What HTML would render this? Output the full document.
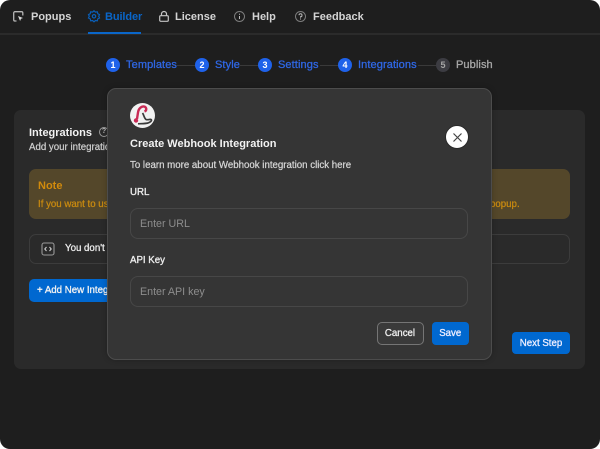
<!DOCTYPE html>
<html><head><meta charset="utf-8"><style>
html,body{margin:0;padding:0;background:#fff}
#p{position:relative;width:600px;height:449px;overflow:hidden;background:#1e1e1e;border-radius:10px;font-family:"Liberation Sans",sans-serif;font-weight:700}
#p *{box-sizing:border-box}
.t{position:absolute;white-space:nowrap;line-height:14px}
.b{position:absolute}
.n{font-size:11px;color:#d4d4d4;top:9px}
.s{font-size:11px;color:#2f67e4;top:58px;font-weight:400;letter-spacing:.1px;-webkit-text-stroke:.3px #2f67e4}
.c{position:absolute;top:58px;width:14px;height:14px;border-radius:50%;background:#1f62ea;color:#fff;font-size:9px;line-height:14px;text-align:center}
.l{position:absolute;top:65px;height:1px;background:#3a3a3a;width:18px}
svg{position:absolute;overflow:visible}
.in{position:absolute;left:130px;width:338px;height:31px;border:1px solid #474747;border-radius:8px;background:#353535;color:#8d8d8d;font-size:10.700px;font-weight:400;padding-left:9px;line-height:31px}
</style></head><body><div id="p">
<svg style="left:13px;top:11px" width="11" height="11" fill="none" stroke="#b5b5b5" stroke-width="1.300"><path d="M3.500 10H2a1.300 1.300 0 0 1-1.300-1.300V2A1.300 1.300 0 0 1 2 .7h6.500A1.300 1.300 0 0 1 9.800 2v2.500"/><path d="M5 5l5 2-2 .8-.9 2.200z" fill="#d8d8d8" stroke="none"/></svg>
<div class="t n" style="left:31px;top:9.500px">Popups</div>
<svg style="left:88px;top:10px" width="12" height="12" fill="none" stroke="#0a5fb8" stroke-width="1.200"><path d="M6 .8l1.400 1.300 1.900-.3.500 1.900 1.700.9-.8 1.700.8 1.700-1.700.9-.5 1.900-1.900-.3L6 11.800l-1.400-1.300-1.900.3-.5-1.900-1.700-.9L1.300 6.300.5 4.600l1.700-.9.500-1.900 1.900.3z"/><circle cx="6" cy="6.300" r="1.700"/></svg>
<div class="t n" style="left:105px;top:9.500px;color:#0a66c9;letter-spacing:-.1px">Builder</div>
<div class="b" style="left:88px;top:32px;width:53px;height:2px;background:#0a66c9;z-index:2"></div>
<svg style="left:159px;top:11px" width="10" height="11" fill="none" stroke="#c4c4c4" stroke-width="1.200"><rect x=".7" y="4.700" width="8.600" height="5.600" rx="1"/><path d="M2.500 4.700V3a2.500 2.500 0 0 1 5 0v1.700"/></svg>
<div class="t n" style="left:175px;top:9.500px">License</div>
<svg style="left:234px;top:10.500px" width="11" height="11" fill="none" stroke="#7d7d7d" stroke-width="1"><circle cx="5.500" cy="5.500" r="5"/><path d="M5.500 5v3M5.500 2.700v1.100" stroke="#bbb"/></svg>
<div class="t n" style="left:252px;top:9.500px">Help</div>
<svg style="left:295px;top:10.500px" width="11" height="11" fill="none" stroke="#7d7d7d" stroke-width="1"><circle cx="5.500" cy="5.500" r="5"/><path d="M4 4.200A1.500 1.500 0 1 1 5.500 5.800v.8M5.500 7.500v1" stroke="#bbb"/></svg>
<div class="t n" style="left:313px;top:9.500px">Feedback</div>
<div class="b" style="left:0;top:33px;width:600px;height:2px;background:#2b2b2b"></div>

<div class="c" style="left:106px">1</div><div class="t s" style="left:126px">Templates</div><div class="l" style="left:177px"></div>
<div class="c" style="left:195px">2</div><div class="t s" style="left:215px">Style</div><div class="l" style="left:240px"></div>
<div class="c" style="left:258px">3</div><div class="t s" style="left:278px">Settings</div><div class="l" style="left:320px"></div>
<div class="c" style="left:338px">4</div><div class="t s" style="left:358px">Integrations</div><div class="l" style="left:418px"></div>
<div class="c" style="left:436px;background:#3c3c42;color:#a5a5a5">5</div><div class="t s" style="left:456px;color:#a8a8a8;-webkit-text-stroke:.3px #a8a8a8">Publish</div>

<div class="b" style="left:14px;top:110px;width:571px;height:259px;background:#2a2a2a;border-radius:7px"></div>
<div class="t" style="left:29px;top:125.500px;font-size:11px;color:#f2f2f2">Integrations</div>
<div class="b" style="left:99px;top:127px;width:10px;height:10px;border:1px solid #999;border-radius:50%;font-size:7px;line-height:8px;text-align:center;color:#bbb">?</div>
<div class="t" style="left:29px;top:141px;font-size:9.700px;font-weight:400;-webkit-text-stroke:.2px #d0d0d0;color:#d0d0d0">Add your integrations</div>
<div class="b" style="left:29px;top:169px;width:541px;height:50px;background:#54472a;border-radius:7px"></div>
<div class="t" style="left:38px;top:178.500px;font-size:11px;color:#d18a0c">Note</div>
<div class="t" style="left:38px;top:197.500px;font-size:9.700px;font-weight:400;-webkit-text-stroke:.25px #c98a10;color:#c98a10">If you want to use</div>
<div class="t" style="left:490px;top:197.500px;font-size:9.700px;font-weight:400;-webkit-text-stroke:.25px #c98a10;color:#c98a10">popup.</div>
<div class="b" style="left:29px;top:233.500px;width:541px;height:30.500px;border:1px solid #3c3c3c;border-radius:7px"></div>
<svg style="left:41px;top:242px" width="14" height="14" fill="none" stroke="#999" stroke-width="1.100"><rect x="1" y="1" width="12" height="12" rx="2"/><path d="M5.500 5L3.800 7l1.700 2M8.500 5l1.700 2-1.700 2" stroke="#ccc"/></svg>
<div class="t" style="left:65px;top:242px;font-size:9.700px;font-weight:400;-webkit-text-stroke:.25px #f0f0f0;color:#f0f0f0">You don't have</div>
<div class="b" style="left:29px;top:279px;width:90px;height:22.500px;background:#0068d0;border-radius:5px"></div>
<div class="t" style="left:37px;top:283.500px;font-size:9.700px;font-weight:400;-webkit-text-stroke:.3px #f2f2f2;color:#f2f2f2">+ Add New Integration</div>
<div class="b" style="left:512px;top:331.500px;width:58px;height:22.500px;background:#0068d0;border-radius:4px;color:#eef;font-size:9.700px;font-weight:400;-webkit-text-stroke:.3px #eef;line-height:23px;text-align:center">Next Step</div>

<div class="b" style="left:107px;top:88px;width:385px;height:272px;background:#353535;border:1px solid #4c4c4c;border-radius:9px;box-shadow:0 0 6px rgba(0,0,0,.25)"></div>
<svg style="left:130px;top:103px" width="25" height="25" fill="none"><circle cx="12.500" cy="12.500" r="12.500" fill="#f2f2f2"/><path d="M12.500 10c1.500 2 1.500 5 3.500 6.500 2 .8 4-.8 5.300.2.700 1.300-1 2.500-3.300 3.300-3 .8-7 .6-10 .8" stroke="#3a3a3a" stroke-width="1.700"/><path d="M7 16L8 9.500C8.800 3.500 15 1.500 16.200 5.500c.3 1.500-.5 2.500-1.700 3" stroke="#c92a55" stroke-width="2.400"/><circle cx="6" cy="17.500" r="2.200" fill="#c92a55"/></svg>
<div class="t" style="left:130px;top:137px;font-size:11px;color:#f2f2f2">Create Webhook Integration</div>
<div class="t" style="left:130px;top:158.500px;font-size:9.700px;font-weight:400;-webkit-text-stroke:.2px #d8d8d8;color:#d8d8d8">To learn more about Webhook integration click here</div>
<div class="t" style="left:130px;top:185.500px;font-size:9.700px;font-weight:400;-webkit-text-stroke:.3px #eee;color:#eee">URL</div>
<div class="in" style="top:208px">Enter URL</div>
<div class="t" style="left:130px;top:253.500px;font-size:9.700px;font-weight:400;-webkit-text-stroke:.3px #eee;color:#eee">API Key</div>
<div class="in" style="top:276px">Enter API key</div>
<div class="b" style="left:445px;top:125px;width:24px;height:24px;background:#fff;border:1px solid #2a2a2a;border-radius:50%"></div>
<svg style="left:452.500px;top:132.500px" width="9" height="9" stroke="#444" stroke-width="1.200"><path d="M.5.5l8 8M8.500.5l-8 8"/></svg>
<div class="b" style="left:376.500px;top:321.500px;width:47px;height:23.500px;background:#3a3a3a;border:1px solid #757575;border-radius:5px;color:#eee;font-size:9.700px;font-weight:400;-webkit-text-stroke:.3px #eee;line-height:22px;text-align:center">Cancel</div>
<div class="b" style="left:432px;top:322px;width:36.500px;height:22.500px;background:#0068d0;border-radius:4px;color:#eef;font-size:9.700px;font-weight:400;-webkit-text-stroke:.3px #eef;line-height:23px;text-align:center">Save</div>
</div></body></html>
